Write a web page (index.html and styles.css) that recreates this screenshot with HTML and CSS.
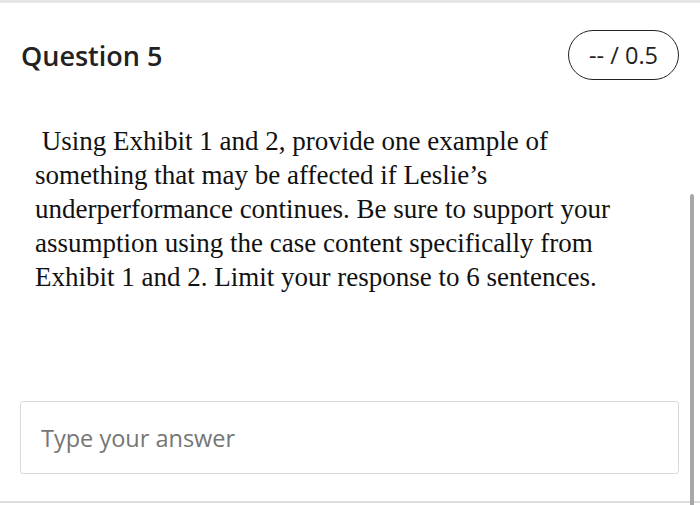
FILE: index.html
```html
<!DOCTYPE html>
<html lang="en">
<head>
<meta charset="utf-8">
<title>Question 5</title>
<link rel="stylesheet" href="styles.css">
</head>
<body>
<div class="page">
  <header class="q-header">
    <h2 class="q-title">Question 5</h2>
    <div class="q-score">-- / 0.5</div>
  </header>
  <p class="q-text">&nbsp;Using Exhibit 1 and 2, provide one example of something that may be affected if Leslie’s underperformance continues. Be sure to support your assumption using the case content specifically from Exhibit 1 and 2. Limit your response to 6 sentences.</p>
  <div class="answer">
    <input class="answer-input" type="text" placeholder="Type your answer">
  </div>
  <div class="scrollbar"></div>
</div>
</body>
</html>
```

FILE: styles.css
```css
html, body {
  margin: 0;
  padding: 0;
  background: #ffffff;
}

.page {
  position: relative;
  width: 700px;
  height: 505px;
  box-sizing: border-box;
  border-top: 3px solid #e6e6e6;
  overflow: hidden;
}

.q-header {
  display: flex;
  justify-content: space-between;
  align-items: center;
  padding: 27px 21px 0 21px;
}

.q-title {
  margin: 0;
  font-family: "Open Sans", sans-serif;
  font-size: 27px;
  font-weight: 600;
  color: #222222;
  line-height: 1;
}

.q-score {
  box-sizing: border-box;
  width: 111px;
  height: 50px;
  border: 1.5px solid #222222;
  border-radius: 25px;
  display: flex;
  align-items: center;
  justify-content: center;
  font-family: "Open Sans", sans-serif;
  font-size: 23.5px;
  color: #222222;
}

.q-text {
  margin: 44px 0 0 35px;
  width: 595px;
  font-family: "Liberation Serif", "Times New Roman", serif;
  font-size: 27px;
  line-height: 34px;
  color: #111111;
}

.answer {
  margin-top: 107px;
  padding: 0 21px 27px 20px;
  border-bottom: 2px solid #dddddd;
}

.answer-input {
  display: block;
  box-sizing: border-box;
  width: 100%;
  height: 73px;
  margin: 0;
  padding: 0 20px;
  border: 1px solid #d9d9d9;
  border-radius: 3px;
  font-family: "Open Sans", sans-serif;
  font-size: 23.5px;
  color: #333333;
  background: #ffffff;
  outline: none;
}

.answer-input::placeholder {
  color: #757575;
}

.scrollbar {
  position: absolute;
  left: 690px;
  top: 191px;
  width: 4px;
  bottom: 0;
  background: #a8a8a8;
  border-radius: 2px 2px 0 0;
}
```
